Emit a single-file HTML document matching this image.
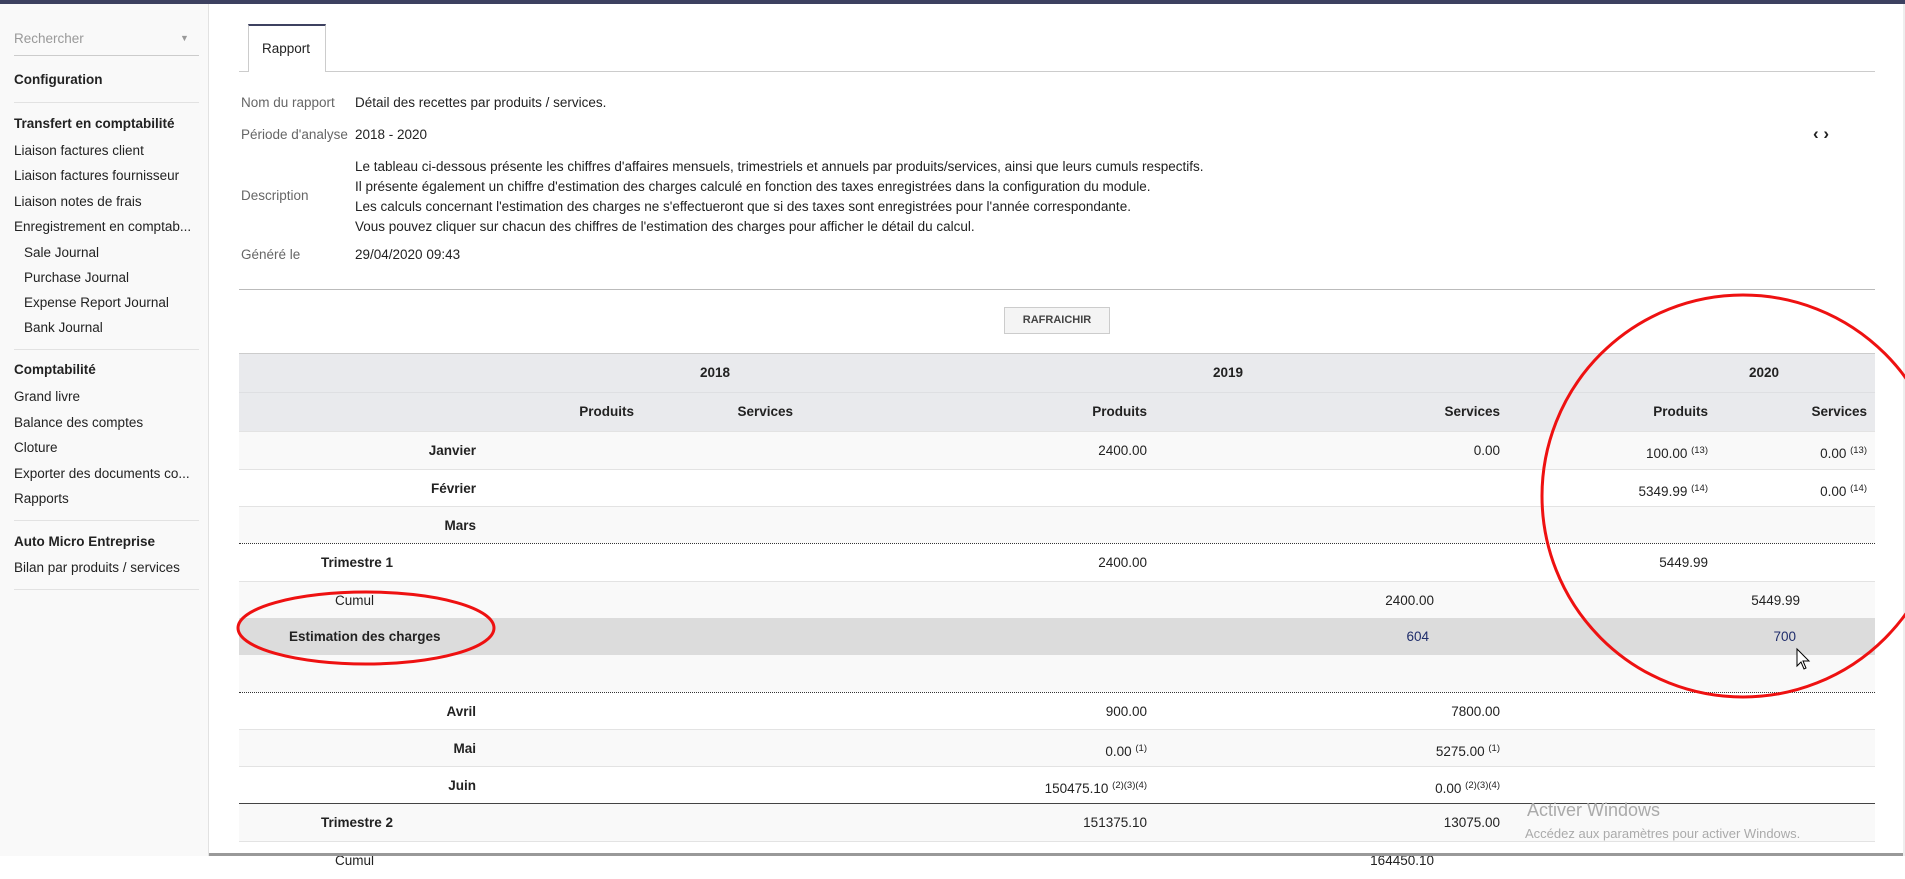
<!DOCTYPE html>
<html><head><meta charset="utf-8"><style>
*{margin:0;padding:0;box-sizing:border-box}
body{width:1905px;height:856px;overflow:hidden;background:#fff;font-family:"Liberation Sans",Arial,sans-serif;font-size:13.5px;color:#222;position:relative}
.a{position:absolute;white-space:nowrap}
.b{font-weight:bold}
.r{position:absolute;left:239px;width:1636px;height:37.5px;border-top:1px solid #e3e3e3}
.t{position:absolute;white-space:nowrap;line-height:37px;top:0}
sup{font-size:9.5px;vertical-align:5px}
.side div{position:absolute;left:14px;white-space:nowrap;font-size:13.5px}
.side .s{left:24px}
.hl{position:absolute;left:10px;width:185px;height:1px;background:#e2e2e2}
.lbl{color:#666}
</style></head><body>
<div class="a" style="left:0;top:0;width:1905px;height:4px;background:#3d4160"></div>
<div class="a" style="left:0;top:4px;width:209px;height:852px;background:#f9f9f9;border-right:1px solid #e2e2e2"></div>
<div class="side">
<div style="top:31px;color:#999">Rechercher</div>
<div style="top:33px;left:180px;color:#999;font-size:9px">▼</div>
<div class="hl" style="top:55px;background:#ccc"></div>
<div class="b" style="top:72px">Configuration</div>
<div class="hl" style="top:102px"></div>
<div class="b" style="top:116px">Transfert en comptabilité</div>
<div style="top:143px">Liaison factures client</div>
<div style="top:168px">Liaison factures fournisseur</div>
<div style="top:194px">Liaison notes de frais</div>
<div style="top:219px">Enregistrement en comptab...</div>
<div class="s" style="top:245px">Sale Journal</div>
<div class="s" style="top:270px">Purchase Journal</div>
<div class="s" style="top:295px">Expense Report Journal</div>
<div class="s" style="top:320px">Bank Journal</div>
<div class="hl" style="top:349px"></div>
<div class="b" style="top:362px">Comptabilité</div>
<div style="top:389px">Grand livre</div>
<div style="top:415px">Balance des comptes</div>
<div style="top:440px">Cloture</div>
<div style="top:466px">Exporter des documents co...</div>
<div style="top:491px">Rapports</div>
<div class="hl" style="top:520px"></div>
<div class="b" style="top:534px">Auto Micro Entreprise</div>
<div style="top:560px">Bilan par produits / services</div>
<div class="hl" style="top:589px"></div>
</div>
<div class="a" style="left:1903px;top:4px;width:2px;height:852px;background:#eee"></div>
<!-- tab -->
<div class="a" style="left:239px;top:71px;width:1636px;height:1px;background:#ccc"></div>
<div class="a" style="left:248px;top:24px;width:78px;height:48px;background:#fff;border:1px solid #ccc;border-top:2px solid #3d4160;border-bottom:none"></div>
<div class="a" style="left:262px;top:41px;font-size:13.5px">Rapport</div>
<!-- info -->
<div class="a lbl" style="left:241px;top:95px">Nom du rapport</div>
<div class="a" style="left:355px;top:95px">Détail des recettes par produits / services.</div>
<div class="a lbl" style="left:241px;top:127px">Période d'analyse</div>
<div class="a" style="left:355px;top:127px">2018 - 2020</div>
<div class="a b" style="left:1813px;top:124px;font-size:17px">‹ ›</div>
<div class="a lbl" style="left:241px;top:188px">Description</div>
<div class="a" style="left:355px;top:157px;line-height:20px">Le tableau ci-dessous présente les chiffres d'affaires mensuels, trimestriels et annuels par produits/services, ainsi que leurs cumuls respectifs.<br>Il présente également un chiffre d'estimation des charges calculé en fonction des taxes enregistrées dans la configuration du module.<br>Les calculs concernant l'estimation des charges ne s'effectueront que si des taxes sont enregistrées pour l'année correspondante.<br>Vous pouvez cliquer sur chacun des chiffres de l'estimation des charges pour afficher le détail du calcul.</div>
<div class="a lbl" style="left:241px;top:247px">Généré le</div>
<div class="a" style="left:355px;top:247px">29/04/2020 09:43</div>
<div class="a" style="left:239px;top:289px;width:1636px;height:1px;background:#bbb"></div>
<div class="a b" style="left:1004px;top:307px;width:106px;height:27px;border:1px solid #ccc;background:#f4f4f4;font-size:11px;text-align:center;line-height:25px;color:#444">RAFRAICHIR</div>
<!-- table header -->
<div class="a" style="left:239px;top:353px;width:1636px;height:78px;background:#e9eaed;border-top:1px solid #ccc"></div>
<div class="a" style="left:239px;top:392px;width:1636px;height:1px;background:#dedfe2"></div>
<div class="a b" style="left:700px;top:365px">2018</div>
<div class="a b" style="left:1213px;top:365px">2019</div>
<div class="a b" style="left:1749px;top:365px">2020</div>
<div class="a b" style="right:1271px;top:404px">Produits</div>
<div class="a b" style="right:1112px;top:404px">Services</div>
<div class="a b" style="right:758px;top:404px">Produits</div>
<div class="a b" style="right:405px;top:404px">Services</div>
<div class="a b" style="right:197px;top:404px">Produits</div>
<div class="a b" style="right:38px;top:404px">Services</div>
<!-- rows -->
<div class="r" style="top:431px;background:#f9f9f9"><span class="t b" style="right:1399px">Janvier</span><span class="t" style="right:728px">2400.00</span><span class="t" style="right:375px">0.00</span><span class="t" style="right:167px">100.00 <sup>(13)</sup></span><span class="t" style="right:8px">0.00 <sup>(13)</sup></span></div>
<div class="r" style="top:469px;background:#fff"><span class="t b" style="right:1399px">Février</span><span class="t" style="right:167px">5349.99 <sup>(14)</sup></span><span class="t" style="right:8px">0.00 <sup>(14)</sup></span></div>
<div class="r" style="top:506px;background:#f9f9f9"><span class="t b" style="right:1399px">Mars</span></div>
<div class="r" style="top:543px;background:#fff;border-top:1px dotted #333"><span class="t b" style="left:82px">Trimestre 1</span><span class="t" style="right:728px">2400.00</span><span class="t" style="right:167px">5449.99</span></div>
<div class="r" style="top:581px;background:#f9f9f9"><span class="t" style="left:96px">Cumul</span><span class="t" style="right:441px">2400.00</span><span class="t" style="right:75px">5449.99</span></div>
<div class="r" style="top:618px;background:#dcdcdc;border-top:none"><span class="t b" style="left:50px">Estimation des charges</span><span class="t" style="right:446px;color:#1f2d6b">604</span><span class="t" style="right:79px;color:#1f2d6b">700</span></div>
<div class="r" style="top:655px;background:#f9f9f9;border-top:none"></div>
<div class="r" style="top:692px;background:#fff;border-top:1px dotted #333"><span class="t b" style="right:1399px">Avril</span><span class="t" style="right:728px">900.00</span><span class="t" style="right:375px">7800.00</span></div>
<div class="r" style="top:729px;background:#f9f9f9"><span class="t b" style="right:1399px">Mai</span><span class="t" style="right:728px">0.00 <sup>(1)</sup></span><span class="t" style="right:375px">5275.00 <sup>(1)</sup></span></div>
<div class="r" style="top:766px;background:#fff"><span class="t b" style="right:1399px">Juin</span><span class="t" style="right:728px">150475.10 <sup>(2)(3)(4)</sup></span><span class="t" style="right:375px">0.00 <sup>(2)(3)(4)</sup></span></div>
<div class="r" style="top:803px;background:#f9f9f9;border-top:1px solid #444"><span class="t b" style="left:82px">Trimestre 2</span><span class="t" style="right:728px">151375.10</span><span class="t" style="right:375px">13075.00</span></div>
<div class="r" style="top:841px;background:#fff"><span class="t" style="left:96px">Cumul</span><span class="t" style="right:441px">164450.10</span></div>
<div class="a" style="left:209px;top:853px;width:1694px;height:3px;background:#999"></div>
<!-- annotations -->
<svg class="a" style="left:0;top:0" width="1905" height="856">
<circle cx="1743" cy="496" r="201" fill="none" stroke="#ee1111" stroke-width="3"/>
<ellipse cx="366" cy="628" rx="128" ry="36" fill="none" stroke="#ee1111" stroke-width="3"/>
<path d="M1797 649 l0 17 l4 -4 l3 7 l2 -1 l-3 -7 l6 0 z" fill="#fff" stroke="#000" stroke-width="1"/>
</svg>
<div class="a" style="left:1527px;top:800px;font-size:18px;color:#aaa">Activer Windows</div>
<div class="a" style="left:1525px;top:826px;font-size:13px;color:#aaa">Accédez aux paramètres pour activer Windows.</div>
</body></html>
